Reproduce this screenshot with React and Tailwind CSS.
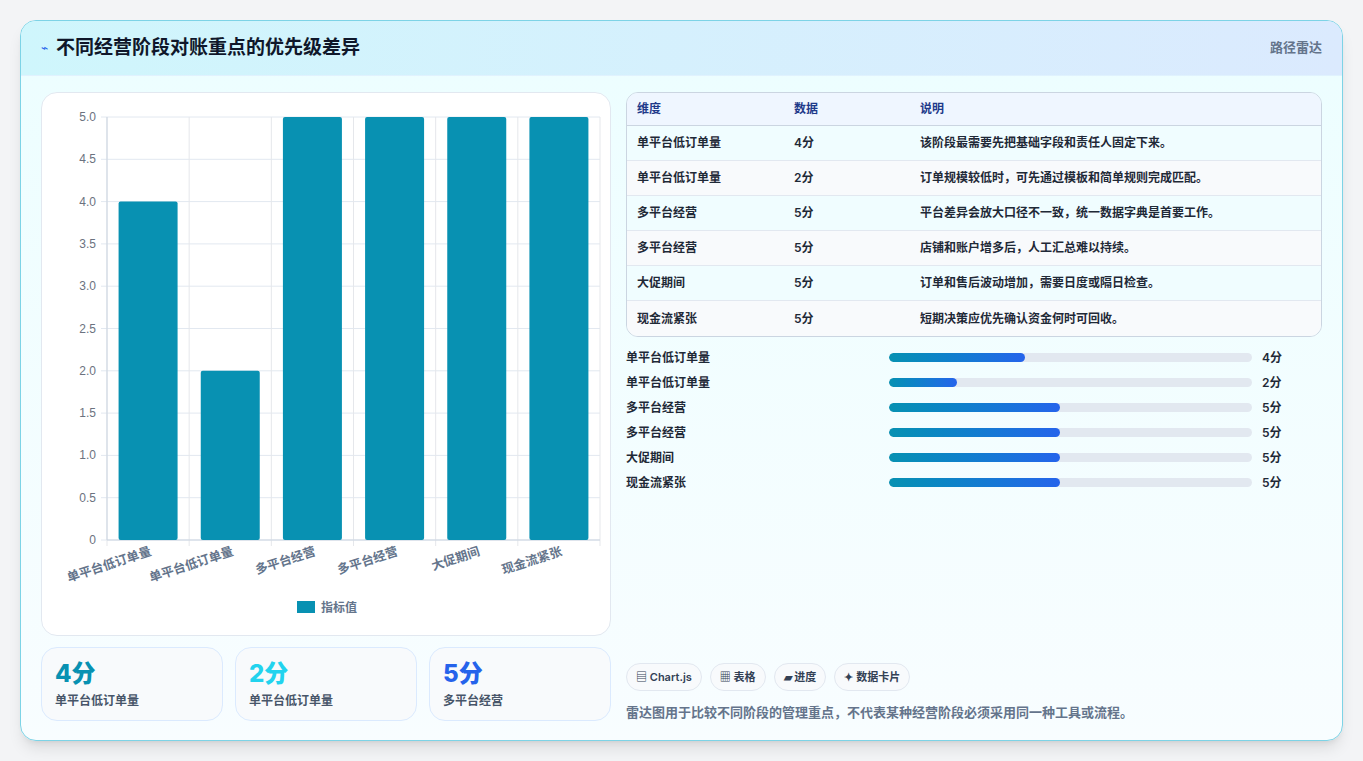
import React from "react";

const cats = ["单平台低订单量","单平台低订单量","多平台经营","多平台经营","大促期间","现金流紧张"];
const vals = [4,2,5,5,5,5];
const rows = [
  ["单平台低订单量","4分","该阶段最需要先把基础字段和责任人固定下来。"],
  ["单平台低订单量","2分","订单规模较低时，可先通过模板和简单规则完成匹配。"],
  ["多平台经营","5分","平台差异会放大口径不一致，统一数据字典是首要工作。"],
  ["多平台经营","5分","店铺和账户增多后，人工汇总难以持续。"],
  ["大促期间","5分","订单和售后波动增加，需要日度或隔日检查。"],
  ["现金流紧张","5分","短期决策应优先确认资金何时可回收。"],
];

function Chart() {
  const L = 65, R = 558, T = 24, B = 447;
  const cw = (R - L) / 6;
  const ticks = [0,0.5,1,1.5,2,2.5,3,3.5,4,4.5,5];
  return (
    <svg width="570" height="542" className="block">
      {ticks.map(t => {
        const y = B - (t / 5) * (B - T);
        return (
          <g key={t}>
            <line x1={L - 6} x2={R} y1={y} y2={y} stroke="#e2e8f0" />
            <text x={L - 11} y={y + 4} textAnchor="end" fontSize="12" fill="#6b7280" fontFamily="Liberation Sans, sans-serif">{t === 0 ? "0" : t.toFixed(1)}</text>
          </g>
        );
      })}
      {Array.from({ length: 7 }).map((_, i) => (
        <line key={i} x1={L + i * cw} x2={L + i * cw} y1={T} y2={B + 6} stroke="#e5e7eb" />
      ))}
      <line x1={L} x2={R} y1={B} y2={B} stroke="#cbd5e1" />
      <line x1={L} x2={L} y1={T} y2={B} stroke="#cbd5e1" />
      {vals.map((v, i) => {
        const h = (v / 5) * (B - T);
        const cx = L + cw * i + cw / 2;
        return <rect key={i} x={cx - 29.5} y={B - h} width="59" height={h} rx="2" fill="#0891b2" />;
      })}
      {cats.map((c, i) => {
        const cx = L + cw * i + cw / 2 + 4;
        return (
          <text key={i} x={cx} y={462} textAnchor="end" fontSize="12.5" fontWeight="700" fill="#64748b" transform={`rotate(-18 ${cx} 462)`} fontFamily="Noto Sans CJK SC, sans-serif">{c}</text>
        );
      })}
      <rect x="255" y="508" width="18" height="12" fill="#0891b2" />
      <text x="279" y="519" fontSize="12" fontWeight="700" fill="#64748b" fontFamily="Noto Sans CJK SC, sans-serif">指标值</text>
    </svg>
  );
}

export default function App() {
  return (
    <div className="w-[1363px] h-[761px] bg-[#f3f4f6] p-5 pb-0" style={{ fontFamily: "Inter, 'Noto Sans CJK SC', sans-serif" }}>
      <div className="h-[721px] rounded-2xl border border-[#7dd3e6] bg-gradient-to-b from-[#ecfeff] to-[#f8fdff] overflow-hidden shadow-lg">
        <div className="h-[55px] flex items-center justify-between px-5 bg-gradient-to-r from-[#cff6fc] to-[#dbeafe] border-b border-[#e0f2fe]">
          <div className="flex items-center gap-2">
            <span className="text-[#2563eb] text-xs">⌁</span>
            <span className="text-[19px] font-bold text-[#0f172a]">不同经营阶段对账重点的优先级差异</span>
          </div>
          <span className="text-[13px] text-[#64748b] font-semibold">路径雷达</span>
        </div>
        <div className="flex gap-[15px] px-5 pt-4">
          <div className="w-[570px] flex flex-col gap-[11px]">
            <div className="h-[544px] rounded-2xl border border-[#e2e8f0] bg-white overflow-hidden">
              <Chart />
            </div>
            <div className="grid grid-cols-3 gap-[12px]">
              {[["4分","text-[#0891b2]","单平台低订单量"],["2分","text-[#22d3ee]","单平台低订单量"],["5分","text-[#2563eb]","多平台经营"]].map(([v,c,l],i)=>(
                <div key={i} className="h-[74px] rounded-2xl border border-[#dbeafe] bg-[#f8fafc] px-[13px] pt-[10px]">
                  <div className={`text-[24px] font-extrabold leading-[32px] ${c}`}>{v}</div>
                  <div className="text-[12px] text-[#475569] font-semibold mt-[2px]">{l}</div>
                </div>
              ))}
            </div>
          </div>
          <div className="flex-1 flex flex-col">
            <div className="rounded-xl border border-[#cbd5e1] overflow-hidden text-[12px]">
              <div className="h-[33px] flex items-center bg-[#eff6ff] border-b border-[#cbd5e1] text-[#1e3a8a] font-semibold">
                <div className="w-[167px] pl-[10px]">维度</div>
                <div className="w-[126px]">数据</div>
                <div>说明</div>
              </div>
              {rows.map((r, i) => (
                <div key={i} className={`h-[35px] flex items-center text-[#1f2937] font-semibold ${i % 2 ? "bg-[#f8fafc]" : "bg-[#f0fdff]"} ${i < 5 ? "border-b border-[#e2e8f0]" : ""}`}>
                  <div className="w-[167px] pl-[10px]">{r[0]}</div>
                  <div className="w-[126px]">{r[1]}</div>
                  <div>{r[2]}</div>
                </div>
              ))}
            </div>
            <div className="flex flex-col mt-[8px]">
              {rows.map((r, i) => (
                <div key={i} className="h-[25px] flex items-center text-[12px] font-semibold text-[#1f2937]">
                  <div className="w-[263px]">{r[0]}</div>
                  <div className="w-[363px] h-[9px] rounded-full bg-[#e2e8f0] overflow-hidden">
                    <div className="h-full rounded-full bg-gradient-to-r from-[#0891b2] to-[#2563eb]" style={{ width: `${(vals[i] / 5) * 47}%` }} />
                  </div>
                  <div className="ml-[10px]">{r[1]}</div>
                </div>
              ))}
            </div>
            <div className="flex-1" />
            <div className="flex gap-[8px] mt-[168px]">
              {["▤ Chart.js","▦ 表格","▰ 进度","✦ 数据卡片"].map(t => (
                <div key={t} className="h-[28px] px-[9px] rounded-full border border-[#e2e8f0] bg-[#f8fafc] text-[11px] font-semibold text-[#334155] flex items-center">{t}</div>
              ))}
            </div>
            <div className="mt-[12px] text-[13px] font-semibold text-[#64748b]">雷达图用于比较不同阶段的管理重点，不代表某种经营阶段必须采用同一种工具或流程。</div>
          </div>
        </div>
      </div>
    </div>
  );
}
